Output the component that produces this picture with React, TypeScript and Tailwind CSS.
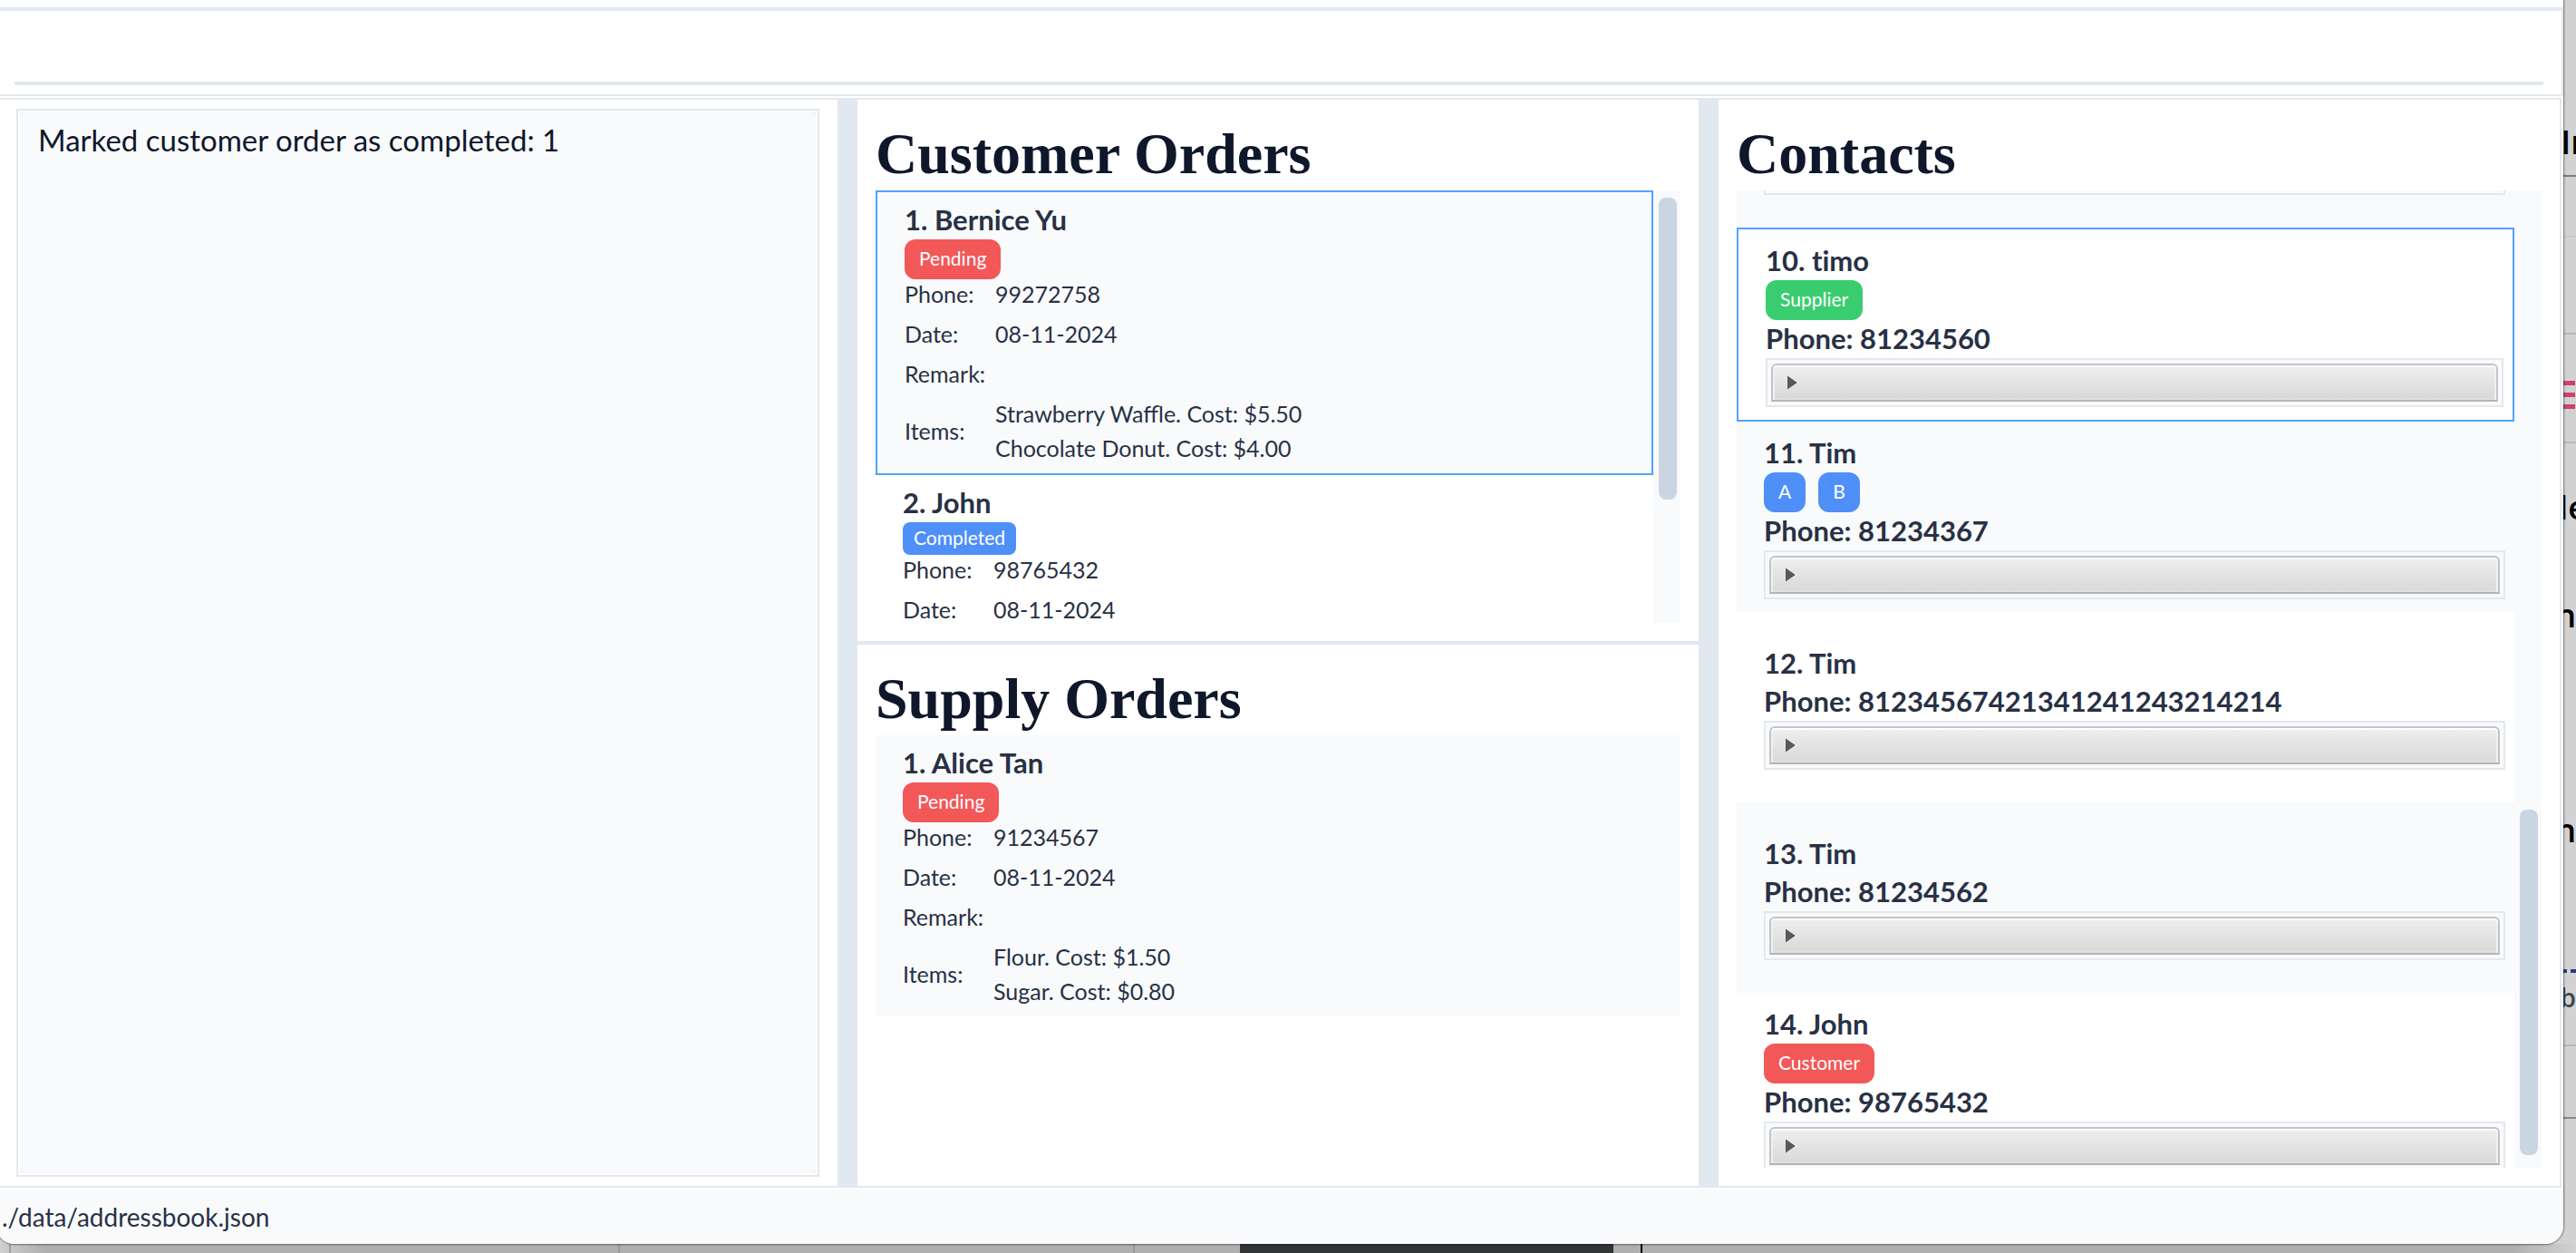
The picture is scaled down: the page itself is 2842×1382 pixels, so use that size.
import React from 'react';

type Tag = { label: string; tone: 'red' | 'blue' | 'green'; compact?: boolean };
type Order = { index: number; name: string; status: Tag; phone: string; date: string; remark?: string; items?: string[] };
type Contact = { index: number; name: string; tags: Tag[]; phone: string };

const customerOrders: Order[] = [
  {
    index: 1,
    name: 'Bernice Yu',
    status: { label: 'Pending', tone: 'red' },
    phone: '99272758',
    date: '08-11-2024',
    remark: '',
    items: ['Strawberry Waffle. Cost: $5.50', 'Chocolate Donut. Cost: $4.00'],
  },
  {
    index: 2,
    name: 'John',
    status: { label: 'Completed', tone: 'blue', compact: true },
    phone: '98765432',
    date: '08-11-2024',
  },
];

const supplyOrders: Order[] = [
  {
    index: 1,
    name: 'Alice Tan',
    status: { label: 'Pending', tone: 'red' },
    phone: '91234567',
    date: '08-11-2024',
    remark: '',
    items: ['Flour. Cost: $1.50', 'Sugar. Cost: $0.80'],
  },
];

const contacts: Contact[] = [
  { index: 10, name: 'timo', tags: [{ label: 'Supplier', tone: 'green' }], phone: '81234560' },
  { index: 11, name: 'Tim', tags: [{ label: 'A', tone: 'blue' }, { label: 'B', tone: 'blue' }], phone: '81234367' },
  { index: 12, name: 'Tim', tags: [], phone: '81234567421341241243214214' },
  { index: 13, name: 'Tim', tags: [], phone: '81234562' },
  { index: 14, name: 'John', tags: [{ label: 'Customer', tone: 'red' }], phone: '98765432' },
];

const tones = { red: 'bg-[#f25858]', blue: 'bg-[#4f8ff8]', green: 'bg-[#3acd70]' };

const strong = 'pb-0.5 text-[31px] leading-10 font-bold [font-variant-ligatures:none]';

function Pill({ tag }: { tag: Tag }) {
  const size = tag.compact ? 'h-9 rounded-lg px-3' : 'h-11 rounded-xl px-4';
  return <span className={`flex items-center pb-0.5 text-[21px] text-white ${size} ${tones[tag.tone]}`}>{tag.label}</span>;
}

function Heading({ children }: { children: React.ReactNode }) {
  return (
    <h2 className="shrink-0 font-['Liberation_Serif',serif] text-[64px] leading-[80px] font-bold text-slate-900">
      {children}
    </h2>
  );
}

function ScrollTrack({ children }: { children: React.ReactNode }) {
  return <div className="flex w-[30px] shrink-0 flex-col bg-slate-50 pr-1 pl-1.5">{children}</div>;
}

function OrderCard({ order, selected }: { order: Order; selected?: boolean }) {
  const bg = order.index % 2 ? 'bg-slate-50' : 'bg-white';
  return (
    <li className={`px-[30px] py-2.5 ${bg} ${selected ? 'border-2 border-blue-400' : ''}`}>
      <h3 className={strong}>
        {order.index}. {order.name}
      </h3>
      <div className="flex">
        <Pill tag={order.status} />
      </div>
      <dl className="grid grid-cols-[100px_1fr] items-center gap-y-3 pb-0.5 text-[25px] leading-8">
        <dt>Phone:</dt>
        <dd>{order.phone}</dd>
        <dt>Date:</dt>
        <dd>{order.date}</dd>
        {order.remark !== undefined && (
          <>
            <dt>Remark:</dt>
            <dd>{order.remark}</dd>
          </>
        )}
        {order.items && (
          <>
            <dt>Items:</dt>
            <dd className="flex flex-col gap-1.5">
              {order.items.map((item) => (
                <span key={item}>{item}</span>
              ))}
            </dd>
          </>
        )}
      </dl>
    </li>
  );
}

function DetailsPane({ label }: { label: string }) {
  return (
    <div className="border-2 border-slate-200 bg-slate-50 p-1">
      <button
        type="button"
        aria-expanded="false"
        aria-label={label}
        className="flex h-[42px] w-full items-center rounded-t-md border-2 border-[#c4c4c4] border-b-[#b4b4b4] bg-linear-to-b from-[#efefef] to-[#d8d8d8] px-4 shadow-[inset_0_2px_0_#fff,inset_2px_0_0_#f0f0f0,inset_-2px_0_0_#f0f0f0,inset_0_-2px_0_#e0e0e0]"
      >
        <svg width="14" height="18" viewBox="0 0 14 18" aria-hidden="true">
          <path d="M0 1.5 13 9 0 16.5Z" fill="#fafafa" />
          <path d="M0 1.5 11 9 0 16.5Z" fill="#595959" />
        </svg>
      </button>
    </div>
  );
}

function ContactCard({ contact, selected }: { contact: Contact; selected?: boolean }) {
  const bg = contact.index % 2 ? 'bg-slate-50' : 'bg-white';
  const frame = selected ? 'min-h-[214px] border-2 border-blue-400' : 'min-h-[210px]';
  return (
    <li className={`flex shrink-0 flex-col justify-center pr-2.5 pl-[30px] ${bg} ${frame}`}>
      <h3 className={strong}>
        {contact.index}. {contact.name}
      </h3>
      {contact.tags.length > 0 && (
        <div className="flex gap-3.5">
          {contact.tags.map((tag) => (
            <Pill key={tag.label} tag={tag} />
          ))}
        </div>
      )}
      <p className={strong}>Phone: {contact.phone}</p>
      <DetailsPane label={`Details of ${contact.name}`} />
    </li>
  );
}

/* The document windows that peek out behind the application window. */
function Desktop() {
  const glyph = "absolute font-['Open_Sans',sans-serif] text-[36px] leading-none font-semibold text-black";
  return (
    <div aria-hidden="true" className="absolute inset-0 overflow-hidden bg-[#d2d2d2]">
      <span className={`${glyph} top-[139px] -right-[17px]`}>In</span>
      <span className={`${glyph} top-[542px] -right-3`}>de</span>
      <span className={`${glyph} top-[661px] right-0`}>n</span>
      <span className={`${glyph} top-[898px] right-0`}>n</span>
      <span className="absolute top-[1086px] right-0 font-['Open_Sans',sans-serif] text-[28px] leading-none font-semibold text-[#41474b]">b</span>
      <i className="absolute top-[193px] right-0 h-0.5 w-4 bg-[#7b7b7b]" />
      <i className="absolute top-[260px] right-0 h-0.5 w-4 bg-[#cacaca]" />
      <i className="absolute top-[367px] right-0 h-0.5 w-4 bg-[#b9b9b9]" />
      <i className="absolute top-[420px] right-px h-[31px] w-4 bg-[repeating-linear-gradient(#cb4469_0_5px,transparent_5px_13px)]" />
      <i className="absolute top-[487px] right-0 h-0.5 w-4 bg-[#b9b9b9]" />
      <i className="absolute top-[1069px] right-0 h-1 w-[14px] bg-[linear-gradient(90deg,#2b3a8f_4px,transparent_4px_8px,#2b3a8f_8px)]" />
      <i className="absolute top-[1152px] right-0 h-0.5 w-4 bg-[#b9b9b9]" />
      <i className="absolute top-[1232px] right-0 h-0.5 w-4 bg-[#8a8a8a]" />
      <div className="absolute inset-x-0 bottom-0 h-2.5 bg-[linear-gradient(90deg,#cfcfcf,#afafaf_50px,#afafaf_calc(100%_-_70px),#d2d2d2)]">
        <i className="absolute inset-y-0 left-2.5 w-0.5 bg-[#a0a0a0]" />
        <i className="absolute inset-y-0 left-[682px] w-0.5 bg-[#9a9a9a]" />
        <i className="absolute inset-y-0 left-[1250px] w-0.5 bg-[#9a9a9a]" />
        <i className="absolute inset-y-0 left-[1368px] w-[412px] bg-[#333436]" />
        <i className="absolute inset-y-0 left-[1810px] w-0.5 bg-black" />
      </div>
    </div>
  );
}

export default function App() {
  return (
    <div className="relative flex h-screen overflow-hidden pr-[14px] pb-2.5 font-['Lato',sans-serif] text-[#283144]">
      <Desktop />
      <main className="relative -ml-1 flex min-w-0 flex-1 flex-col overflow-hidden rounded-b-[20px] bg-white pt-2 shadow-[0_0_2px_1px_rgba(0,0,0,0.45)]">
        <form className="border-t-4 border-r-2 border-b-2 border-slate-200 pt-3 pr-5 pb-2.5 pl-5">
          <input
            type="text"
            aria-label="Command"
            className="block h-[70px] w-full border-b-4 border-slate-200 bg-transparent px-4 text-[33px] outline-none"
          />
        </form>

        <div className="mt-0.5 mr-0.5 grid min-h-0 flex-1 grid-cols-[1fr_22px_1fr_22px_1fr] border-y-2 border-r-2 border-slate-200">
          <section className="flex min-w-0 py-2.5 pr-5 pl-[22px]">
            <div className="flex flex-1 border-2 border-slate-200 p-0.5">
              <div className="flex flex-1 bg-[#f3f3f3]">
                <textarea
                  readOnly
                  aria-label="Result"
                  defaultValue="Marked customer order as completed: 1"
                  className="flex-1 resize-none rounded-lg bg-slate-50 px-5 py-2.5 text-[33px] leading-10 text-slate-900 outline-none"
                />
              </div>
            </div>
          </section>

          <div className="bg-slate-200" />

          <div className="flex min-h-0 min-w-0 flex-col">
            <section className="flex min-h-0 flex-1 basis-0 flex-col p-5">
              <Heading>Customer Orders</Heading>
              <div className="flex min-h-0 flex-1">
                <ul className="flex-1 overflow-hidden">
                  {customerOrders.map((order) => (
                    <OrderCard key={order.index} order={order} selected={order.index === 1} />
                  ))}
                </ul>
                <ScrollTrack>
                  <div className="mt-2 h-[333px] rounded-lg bg-slate-300" />
                </ScrollTrack>
              </div>
            </section>
            <div className="h-1 shrink-0 bg-slate-200" />
            <section className="flex min-h-0 flex-1 basis-0 flex-col p-5">
              <Heading>Supply Orders</Heading>
              <ul className="min-h-0 flex-1 overflow-hidden">
                {supplyOrders.map((order) => (
                  <OrderCard key={order.index} order={order} />
                ))}
              </ul>
            </section>
          </div>

          <div className="bg-slate-200" />

          <section className="flex min-h-0 min-w-0 flex-col p-5">
            <Heading>Contacts</Heading>
            <div className="flex min-h-0 flex-1">
              <ul className="flex flex-1 flex-col overflow-hidden">
                <li className="shrink-0 bg-slate-50 pr-2.5 pb-9 pl-[30px]">
                  <div className="h-[5px] border-x-2 border-b-2 border-slate-200" />
                </li>
                {contacts.map((contact) => (
                  <ContactCard key={contact.index} contact={contact} selected={contact.index === 10} />
                ))}
              </ul>
              <ScrollTrack>
                <div className="mt-auto mb-3.5 h-[381px] rounded-lg bg-slate-300" />
              </ScrollTrack>
            </div>
          </section>
        </div>

        <footer className="mt-0.5 flex h-[60px] shrink-0 items-center bg-slate-50 pl-1.5 text-[28px]">
          ./data/addressbook.json
        </footer>
      </main>
    </div>
  );
}
